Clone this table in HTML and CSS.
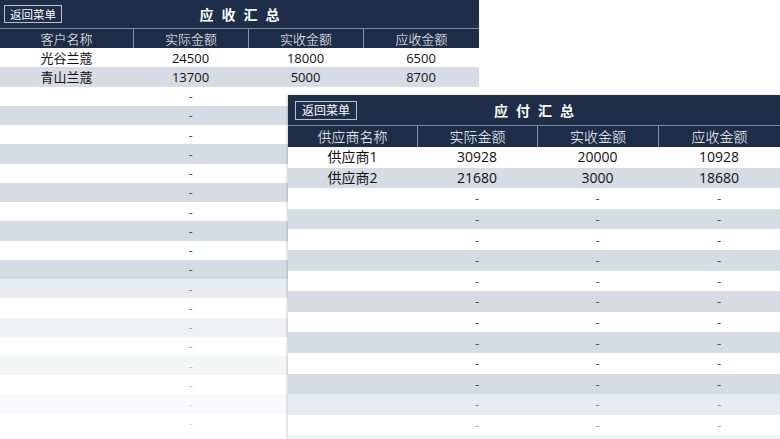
FILE: index.html
```html
<!DOCTYPE html>
<html lang="zh">
<head>
<meta charset="utf-8">
<title>应收汇总 / 应付汇总</title>
<link rel="stylesheet" href="styles.css">
</head>
<body>
<div class="page">
  <section class="sheet sheet-left">
    <div class="titlebar">
      <button class="back">返回菜单</button>
      <h1 class="title">应收汇总</h1>
    </div>
    <div class="row head">
      <div class="cell">客户名称</div><div class="cell">实际金额</div><div class="cell">实收金额</div><div class="cell">应收金额</div>
    </div>
    <div class="row"><div class="cell">光谷兰蔻</div><div class="cell">24500</div><div class="cell">18000</div><div class="cell">6500</div></div>
    <div class="row g"><div class="cell">青山兰蔻</div><div class="cell">13700</div><div class="cell">5000</div><div class="cell">8700</div></div>
    <div class="row"><div class="cell"></div><div class="cell dash">-</div><div class="cell"></div><div class="cell"></div></div>
    <div class="row g"><div class="cell"></div><div class="cell dash">-</div><div class="cell"></div><div class="cell"></div></div>
    <div class="row"><div class="cell"></div><div class="cell dash">-</div><div class="cell"></div><div class="cell"></div></div>
    <div class="row g"><div class="cell"></div><div class="cell dash">-</div><div class="cell"></div><div class="cell"></div></div>
    <div class="row"><div class="cell"></div><div class="cell dash">-</div><div class="cell"></div><div class="cell"></div></div>
    <div class="row g"><div class="cell"></div><div class="cell dash">-</div><div class="cell"></div><div class="cell"></div></div>
    <div class="row"><div class="cell"></div><div class="cell dash">-</div><div class="cell"></div><div class="cell"></div></div>
    <div class="row g"><div class="cell"></div><div class="cell dash">-</div><div class="cell"></div><div class="cell"></div></div>
    <div class="row"><div class="cell"></div><div class="cell dash">-</div><div class="cell"></div><div class="cell"></div></div>
    <div class="row g"><div class="cell"></div><div class="cell dash">-</div><div class="cell"></div><div class="cell"></div></div>
    <div class="row g f1"><div class="cell"></div><div class="cell dash">-</div><div class="cell"></div><div class="cell"></div></div>
    <div class="row f1"><div class="cell"></div><div class="cell dash">-</div><div class="cell"></div><div class="cell"></div></div>
    <div class="row g f2"><div class="cell"></div><div class="cell dash">-</div><div class="cell"></div><div class="cell"></div></div>
    <div class="row f2"><div class="cell"></div><div class="cell dash">-</div><div class="cell"></div><div class="cell"></div></div>
    <div class="row g f3"><div class="cell"></div><div class="cell dash">-</div><div class="cell"></div><div class="cell"></div></div>
    <div class="row f3"><div class="cell"></div><div class="cell dash">-</div><div class="cell"></div><div class="cell"></div></div>
    <div class="row g f4"><div class="cell"></div><div class="cell dash">-</div><div class="cell"></div><div class="cell"></div></div>
    <div class="row f4"><div class="cell"></div><div class="cell dash">-</div><div class="cell"></div><div class="cell"></div></div>
  </section>

  <section class="sheet sheet-right">
    <div class="titlebar">
      <button class="back">返回菜单</button>
      <h1 class="title">应付汇总</h1>
    </div>
    <div class="row head">
      <div class="cell">供应商名称</div><div class="cell">实际金额</div><div class="cell">实收金额</div><div class="cell">应收金额</div>
    </div>
    <div class="row"><div class="cell">供应商1</div><div class="cell">30928</div><div class="cell">20000</div><div class="cell">10928</div></div>
    <div class="row g"><div class="cell">供应商2</div><div class="cell">21680</div><div class="cell">3000</div><div class="cell">18680</div></div>
    <div class="row"><div class="cell"></div><div class="cell dash">-</div><div class="cell dash">-</div><div class="cell dash">-</div></div>
    <div class="row g"><div class="cell"></div><div class="cell dash">-</div><div class="cell dash">-</div><div class="cell dash">-</div></div>
    <div class="row"><div class="cell"></div><div class="cell dash">-</div><div class="cell dash">-</div><div class="cell dash">-</div></div>
    <div class="row g"><div class="cell"></div><div class="cell dash">-</div><div class="cell dash">-</div><div class="cell dash">-</div></div>
    <div class="row"><div class="cell"></div><div class="cell dash">-</div><div class="cell dash">-</div><div class="cell dash">-</div></div>
    <div class="row g"><div class="cell"></div><div class="cell dash">-</div><div class="cell dash">-</div><div class="cell dash">-</div></div>
    <div class="row"><div class="cell"></div><div class="cell dash">-</div><div class="cell dash">-</div><div class="cell dash">-</div></div>
    <div class="row g"><div class="cell"></div><div class="cell dash">-</div><div class="cell dash">-</div><div class="cell dash">-</div></div>
    <div class="row"><div class="cell"></div><div class="cell dash">-</div><div class="cell dash">-</div><div class="cell dash">-</div></div>
    <div class="row g"><div class="cell"></div><div class="cell dash">-</div><div class="cell dash">-</div><div class="cell dash">-</div></div>
    <div class="row g f1"><div class="cell"></div><div class="cell dash">-</div><div class="cell dash">-</div><div class="cell dash">-</div></div>
    <div class="row f2"><div class="cell"></div><div class="cell dash">-</div><div class="cell dash">-</div><div class="cell dash">-</div></div>
    <div class="row g f2"><div class="cell"></div><div class="cell"></div><div class="cell"></div><div class="cell"></div></div>
  </section>
</div>
</body>
</html>
```

FILE: styles.css
```css
* { box-sizing: border-box; }
html, body { margin: 0; padding: 0; background: #ffffff; }
body {
  font-family: "Open Sans", "Noto Sans CJK SC", sans-serif;
  color: #111111;
}
.page {
  position: relative;
  width: 780px;
  height: 439px;
  overflow: hidden;
}

.sheet { display: flex; flex-direction: column; }
.sheet-left { width: 479px; }
.sheet-right {
  position: absolute;
  left: 288px;
  top: 95px;
  width: 492px;
  box-shadow: -1px 0 2px rgba(60, 70, 90, 0.25);
}

.titlebar {
  display: grid;
  grid-template-columns: 1fr auto 1fr;
  align-items: center;
  background: #1e2d48;
  height: 28px;
  padding: 0 4px;
}
.sheet-right .titlebar { height: 30px; padding: 0 7px; }

.back {
  justify-self: start;
  font-family: "Noto Sans CJK SC", sans-serif;
  font-size: 11.5px;
  line-height: 16px;
  color: #ffffff;
  background: transparent;
  border: 1px solid #b9c1cd;
  padding: 0 5px;
  height: 18px;
  margin: 0;
}
.sheet-right .back { height: 19px; padding: 0 6px; font-size: 12px; }

.title {
  margin: 0;
  font-family: "Noto Sans CJK SC", sans-serif;
  font-size: 14px;
  font-weight: 700;
  color: #ffffff;
  letter-spacing: 8px;
  padding-left: 8px;
  line-height: 20px;
}

.row {
  display: grid;
  grid-template-columns: 133px 115px 115px 116px;
  height: 19.25px;
  background: #ffffff;
  font-size: 13px;
  align-items: center;
}
.sheet-right .row {
  grid-template-columns: 129px 120px 121px 122px;
  height: 20.6px;
  font-size: 14px;
}
.cell {
  text-align: center;
  line-height: 18px;
  white-space: nowrap;
}
.row.head {
  height: 20px;
  background: #1e2d48;
  border-top: 1px solid #7d8aa0;
  color: #ffffff;
  align-items: stretch;
}
.sheet-right .row.head { height: 22px; }
.row.head .cell {
  font-family: "Noto Sans CJK SC", sans-serif;
  font-weight: 300;
  line-height: 19px;
  border-left: 1px solid #8391a8;
}
.sheet-right .row.head .cell { line-height: 21px; }
.row.head .cell:first-child { border-left: none; }

.row.g { background: #d6dce4; }
.dash { color: #4a5059; font-size: 13px; }

.row.f1 .dash { color: #868c95; }
.row.g.f1 { background: #e8ebef; }
.row.f2 .dash { color: #a6abb2; }
.row.g.f2 { background: #eff1f4; }
.row.f3 .dash { color: #c2c5ca; }
.row.g.f3 { background: #f4f5f7; }
.row.f4 .dash { color: #dcdfe2; }
.row.g.f4 { background: #f9f9fb; }
```
